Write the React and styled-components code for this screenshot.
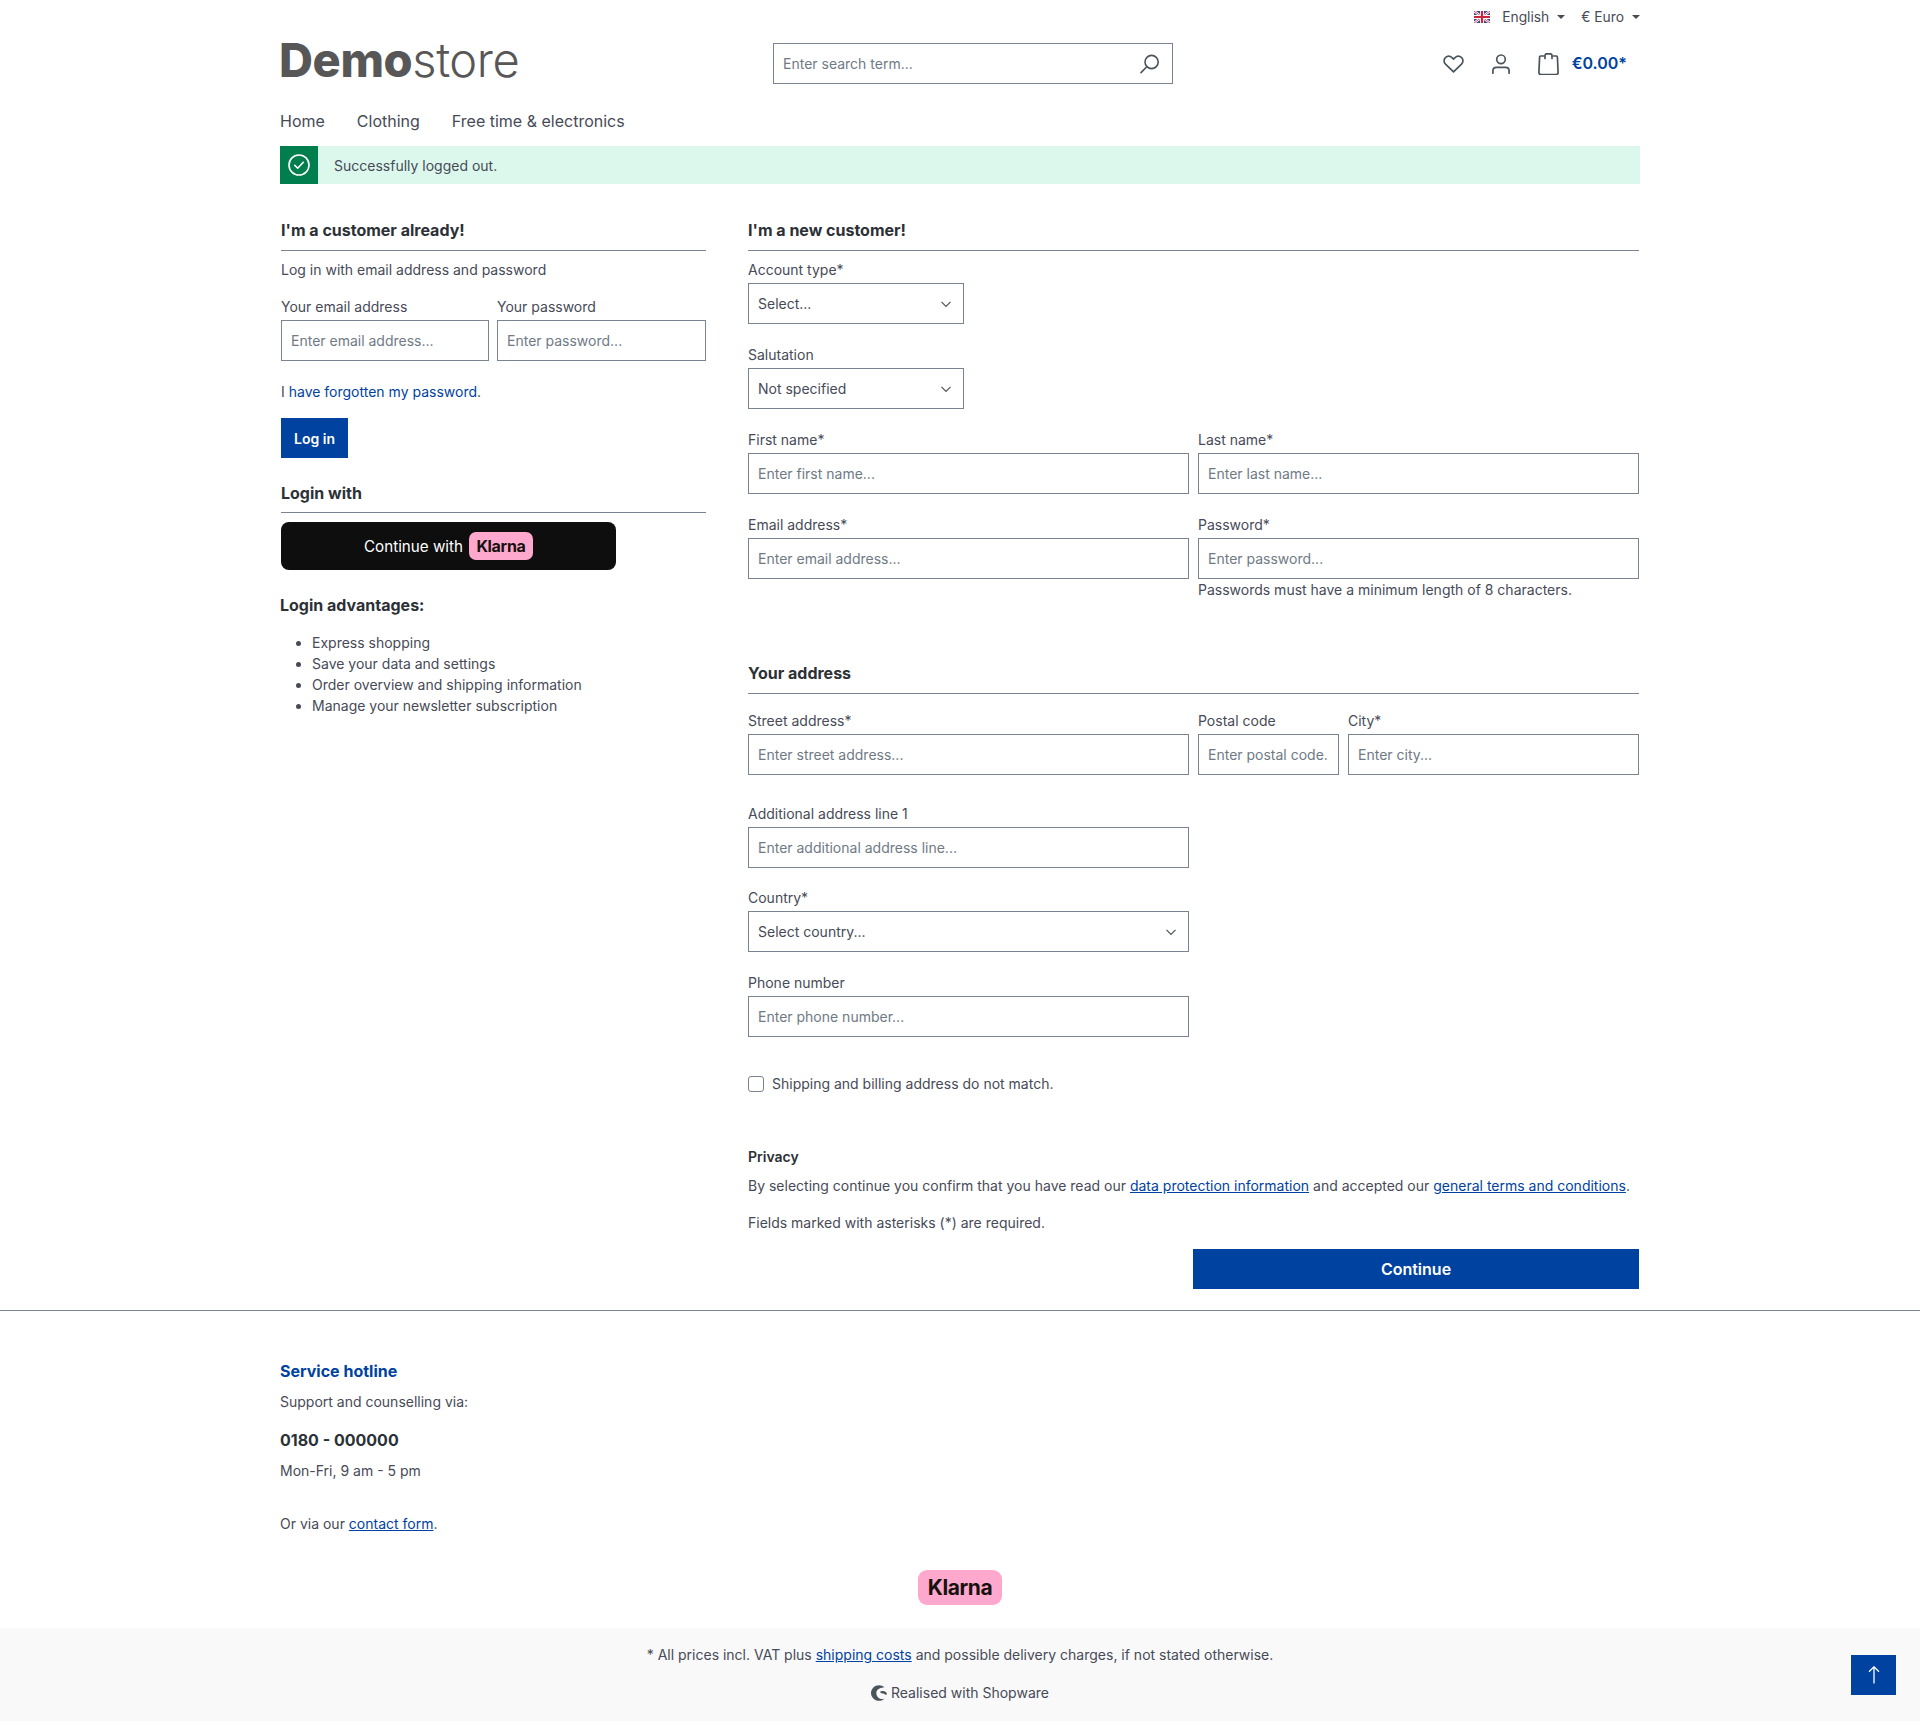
import React from "react";
import styled, { createGlobalStyle } from "styled-components";

const Global = createGlobalStyle`
  *, *::before, *::after { box-sizing: border-box; }
  html, body { margin: 0; padding: 0; background: #fff; }
  body { font-family: Inter, "Noto Sans", sans-serif; font-size: 14px; line-height: 21px; color: #474a57; }
  a { color: #0042a0; }
`;

const Page = styled.div`position: relative; width: 1920px; height: 1721px; overflow: hidden;`;
const Container = styled.div`width: 1360px; margin: 0 auto;`;

const TopBar = styled.div`display: flex; justify-content: flex-end; align-items: center; gap: 16px; height: 34px; color: #474a57; font-size: 13.8px;`;
const TopItem = styled.div`display: flex; align-items: center; height: 21px;`;
const Flag = styled.svg`width: 16px; height: 12px; margin-right: 12px; display: block;`;
const Caret = styled.span`display: inline-block; margin-left: 8px; border-top: 4.8px solid #474a57; border-left: 4.2px solid transparent; border-right: 4.2px solid transparent;`;

const HeaderMain = styled.div`display: grid; grid-template-columns: 493px 400px 1fr; height: 41px; margin-top: 9px; align-items: center;`;
const Logo = styled.div`font-size: 47px; line-height: 41px; color: #575757; letter-spacing: -0.4px; margin: -8px 0 0 -1px; white-space: nowrap;`;
const LogoStrong = styled.span`font-weight: 800;`;
const LogoLight = styled.span`font-weight: 300;`;
const SearchBox = styled.div`position: relative; height: 41px;`;
const SearchInput = styled.input`
  width: 100%; height: 41px; border: 1px solid #798490; padding: 0 50px 0 9px; font: 14px/21px Inter, sans-serif; outline: none; border-radius: 0;
  &::placeholder { color: #6f7a85; opacity: 1; }
`;
const SearchIcon = styled.svg`position: absolute; right: 13px; top: 11px; width: 20px; height: 20px;`;
const Actions = styled.div`display: flex; justify-content: flex-end; align-items: center; padding-right: 13px;`;
const HeartIcon = styled.svg`width: 21px; height: 18px; margin-right: 28px;`;
const UserIcon = styled.svg`width: 18px; height: 20px; margin-right: 28px;`;
const BagIcon = styled.svg`width: 21px; height: 22px; margin: 1px 13px 0 0;`;
const Price = styled.span`font-size: 16px; line-height: 24px; font-weight: 600; color: #0042a0; margin-top: -2px;`;

const Nav = styled.nav`display: flex; gap: 32px; font-size: 16px; line-height: 24px; color: #474a57; padding: 25px 0 13px;`;
const NavLink = styled.span``;

const Alert = styled.div`display: flex; align-items: center; height: 38px; background: #dcf8ed; color: #474a57;`;
const AlertIcon = styled.div`width: 38px; height: 38px; background: #007e4e; display: flex; align-items: center; justify-content: center;`;
const AlertText = styled.span`margin-left: 16px;`;

const Main = styled.div`display: grid; grid-template-columns: 425px 891px; column-gap: 42px; padding: 34px 0 0 1px; align-items: start;`;
const Heading = styled.h2`margin: 0 0 8px; font-size: 16px; line-height: 24px; font-weight: 700; color: #2b3136; padding-bottom: 8px; border-bottom: 1px solid #798490;`;
const SpacedHeading = styled(Heading)`margin-bottom: 16px;`;
const Intro = styled.p`margin: 0 0 16px;`;
const LoginRow = styled.div`display: grid; grid-template-columns: 208px 209px; column-gap: 8px;`;
const Row = styled.div`display: grid; grid-template-columns: repeat(12, 1fr); column-gap: 9px;`;
const Field = styled.div`grid-column: span ${p => p.$span}; margin-bottom: ${p => p.$mb ?? 20}px; min-width: 0;`;
const Label = styled.label`display: block; line-height: 21px; margin-bottom: 3px;`;
const Input = styled.input`
  display: block; width: 100%; height: 41px; border: 1px solid #798490; border-radius: 0; padding: 0 11px 0 9px; font: 14px/21px Inter, sans-serif; color: #474a57; background: #fff; outline: none;
  &::placeholder { color: #6f7a85; opacity: 1; }
`;
const SelectWrap = styled.div`position: relative;`;
const Select = styled.select`
  display: block; width: 100%; height: 41px; border: 1px solid #798490; border-radius: 0; padding: 0 30px 0 9px; font: 14px/21px Inter, sans-serif; color: #474a57; background: #fff; appearance: none; outline: none;
`;
const Chevron = styled.svg`position: absolute; right: 12px; top: 15px; width: 12px; height: 12px;`;
const Help = styled.div`line-height: 21px;`;

const Forgot = styled.p`margin: 20px 0 16px;`;
const PlainLink = styled.a`text-decoration: none;`;
const Button = styled.button`
  display: block; height: 40px; border: 0; border-radius: 0; background: #0042a0; color: #fff; font: 600 14px/21px Inter, sans-serif; padding: 0 13px;
`;
const WideButton = styled(Button)`width: 446px; font-size: 16px; margin-left: auto; margin-right: 0;`;
const LoginWith = styled.h2`margin: 23px 0 9px; font-size: 16px; line-height: 24px; font-weight: 700; color: #2b3136; padding-bottom: 7px; border-bottom: 1px solid #798490;`;
const KlarnaButton = styled.button`
  display: flex; align-items: center; justify-content: center; gap: 6px; width: 335px; height: 48px; border: 0; border-radius: 8px; background: #0e0e0e; color: #fff; font: 400 15.2px/24px Inter, sans-serif; padding: 0;
`;
const KlarnaLabel = styled.span`margin-top: 2px;`;
const KlarnaBadge = styled.span`
  display: inline-flex; align-items: center; justify-content: center; width: 64px; height: 28px; border-radius: 7px; background: #ffa8cd; color: #17120f; font: 700 16px/28px Inter, sans-serif; letter-spacing: -0.3px;
`;
const Advantages = styled.h3`margin: 23px 0 0 -1px; font-size: 16px; line-height: 24px; font-weight: 700; color: #2b3136;`;
const List = styled.ul`margin: 15px 0 0; padding: 0 0 0 31px;`;

const Spacer = styled.div`height: ${p => p.$h}px;`;
const CheckRow = styled.label`display: flex; align-items: center; gap: 8px; height: 21px;`;
const Check = styled.span`display: block; width: 16px; height: 16px; border: 1px solid #798490; border-radius: 3px;`;
const Strong = styled.div`font-weight: 600; color: #2b3136; line-height: 21px; font-size: 14px;`;
const Para = styled.p`margin: ${p => p.$mt}px 0 0; line-height: 21px;`;

const Rule = styled.hr`margin: 21px 0 0; border: 0; border-top: 1px solid #798490;`;
const FooterTitle = styled.div`font-size: 16px; line-height: 24px; font-weight: 700; color: #0042a0; margin-top: 48px;`;
const FooterPhone = styled.div`font-size: 16px; line-height: 24px; font-weight: 700; color: #2b3136; margin-top: 16px;`;
const FooterBadgeRow = styled.div`display: flex; justify-content: center; margin-top: 36px;`;
const FooterBadge = styled.div`
  width: 84px; height: 35px; border-radius: 9px; background: #ffa8cd; color: #17120f; font: 700 21px/35px Inter, sans-serif; letter-spacing: -0.4px; text-align: center;
`;
const Bottom = styled.footer`margin-top: 23px; height: 93px; background: #f9f9f9; text-align: center; padding-top: 16px; position: relative;`;
const Powered = styled.div`display: flex; justify-content: center; align-items: center; gap: 4px; margin-top: 17px;`;
const ShopwareIcon = styled.svg`width: 16px; height: 16px;`;
const ScrollTop = styled.button`
  position: absolute; right: 24px; top: 27px; width: 45px; height: 40px; background: #0042a0; border: 0; padding: 0; display: flex; align-items: center; justify-content: center;
`;

const ChevronDown = () => (
  <Chevron viewBox="0 0 12 12"><path d="M1.5 3.8 6 8.3l4.5-4.5" fill="none" stroke="#4a545b" strokeWidth="1.2" /></Chevron>
);
const SelectField = ({ children }) => (
  <SelectWrap>
    <Select defaultValue="0"><option value="0">{children}</option></Select>
    <ChevronDown />
  </SelectWrap>
);

export default function App() {
  return (
    <Page>
      <Global />
      <Container>
        <TopBar>
          <TopItem>
            <Flag viewBox="0 0 16 12">
              <rect width="16" height="12" fill="#3b4a8c" />
              <path d="M0 0l16 12M16 0L0 12" stroke="#fff" strokeWidth="2.4" />
              <path d="M0 0l16 12M16 0L0 12" stroke="#c8263f" strokeWidth="0.8" />
              <path d="M8 0v12M0 6h16" stroke="#fff" strokeWidth="4" />
              <path d="M8 0v12M0 6h16" stroke="#c8263f" strokeWidth="2.2" />
            </Flag>
            English<Caret />
          </TopItem>
          <TopItem>€ Euro<Caret /></TopItem>
        </TopBar>
        <HeaderMain>
          <Logo><LogoStrong>Demo</LogoStrong><LogoLight>store</LogoLight></Logo>
          <SearchBox>
            <SearchInput placeholder="Enter search term..." />
            <SearchIcon viewBox="0 0 20 20" fill="none" stroke="#4a545b" strokeWidth="1.6">
              <circle cx="11.6" cy="8" r="6.6" />
              <path d="M6.8 12.8 1 18.6" strokeLinecap="round" />
            </SearchIcon>
          </SearchBox>
          <Actions>
            <HeartIcon viewBox="0 0 21 18" fill="none" stroke="#4a545b" strokeWidth="1.7">
              <path d="M10.5 16.8 2.5 9.2C.5 7.2.6 4.2 2.6 2.4 4.5.8 7.2 1 9 2.7l1.5 1.4L12 2.7c1.8-1.7 4.5-1.9 6.4-.3 2 1.8 2.1 4.8.1 6.8Z" strokeLinejoin="round" />
            </HeartIcon>
            <UserIcon viewBox="0 0 18 20" fill="none" stroke="#4a545b" strokeWidth="1.7">
              <circle cx="9" cy="5.3" r="4.3" />
              <path d="M.9 19.2v-2.4c0-2 1.6-3.4 3.6-3.4h9c2 0 3.6 1.4 3.6 3.4v2.4" strokeLinecap="round" />
            </UserIcon>
            <BagIcon viewBox="0 0 21 22" fill="none" stroke="#4a545b" strokeWidth="1.7">
              <path d="M6.5 3H2.6a1 1 0 0 0-1 1L.9 19.5a2 2 0 0 0 2 2h15.2a2 2 0 0 0 2-2L19.4 4a1 1 0 0 0-1-1h-3.9" strokeLinejoin="round" />
              <path d="M7 5.5v-3A1.7 1.7 0 0 1 8.7.8h3.6A1.7 1.7 0 0 1 14 2.5v3" strokeLinecap="round" />
            </BagIcon>
            <Price>€0.00*</Price>
          </Actions>
        </HeaderMain>
        <Nav>
          <NavLink>Home</NavLink>
          <NavLink>Clothing</NavLink>
          <NavLink>Free time &amp; electronics</NavLink>
        </Nav>
        <Alert>
          <AlertIcon>
            <svg width="22" height="22" viewBox="0 0 22 22" fill="none" stroke="#fff" strokeWidth="1.6">
              <circle cx="11" cy="11" r="10" />
              <path d="M6.8 11.4l2.9 2.9 5.6-6" strokeLinecap="round" strokeLinejoin="round" />
            </svg>
          </AlertIcon>
          <AlertText>Successfully logged out.</AlertText>
        </Alert>

        <Main>
          <section>
            <Heading>I'm a customer already!</Heading>
            <Intro>Log in with email address and password</Intro>
            <LoginRow>
              <Field $span={1} $mb={0}>
                <Label>Your email address</Label>
                <Input placeholder="Enter email address..." />
              </Field>
              <Field $span={1} $mb={0}>
                <Label>Your password</Label>
                <Input placeholder="Enter password..." />
              </Field>
            </LoginRow>
            <Forgot><PlainLink as="span">I </PlainLink><PlainLink href="#">have forgotten my password</PlainLink>.</Forgot>
            <Button>Log in</Button>
            <LoginWith>Login with</LoginWith>
            <KlarnaButton><KlarnaLabel>Continue with</KlarnaLabel> <KlarnaBadge>Klarna</KlarnaBadge></KlarnaButton>
            <Advantages>Login advantages:</Advantages>
            <List>
              <li>Express shopping</li>
              <li>Save your data and settings</li>
              <li>Order overview and shipping information</li>
              <li>Manage your newsletter subscription</li>
            </List>
          </section>

          <section>
            <Heading>I'm a new customer!</Heading>
            <Row>
              <Field $span={3}>
                <Label>Account type*</Label>
                <SelectField>Select...</SelectField>
              </Field>
            </Row>
            <Row>
              <Field $span={3}>
                <Label>Salutation</Label>
                <SelectField>Not specified</SelectField>
              </Field>
            </Row>
            <Row>
              <Field $span={6}>
                <Label>First name*</Label>
                <Input placeholder="Enter first name..." />
              </Field>
              <Field $span={6}>
                <Label>Last name*</Label>
                <Input placeholder="Enter last name..." />
              </Field>
            </Row>
            <Row>
              <Field $span={6}>
                <Label>Email address*</Label>
                <Input placeholder="Enter email address..." />
              </Field>
              <Field $span={6}>
                <Label>Password*</Label>
                <Input placeholder="Enter password..." />
                <Help>Passwords must have a minimum length of 8 characters.</Help>
              </Field>
            </Row>
            <Spacer $h={41} />
            <SpacedHeading>Your address</SpacedHeading>
            <Row>
              <Field $span={6} $mb={28}>
                <Label>Street address*</Label>
                <Input placeholder="Enter street address..." />
              </Field>
              <Field $span={2} $mb={28}>
                <Label>Postal code</Label>
                <Input placeholder="Enter postal code..." />
              </Field>
              <Field $span={4} $mb={28}>
                <Label>City*</Label>
                <Input placeholder="Enter city..." />
              </Field>
            </Row>
            <Row>
              <Field $span={6} $mb={19}>
                <Label>Additional address line 1</Label>
                <Input placeholder="Enter additional address line..." />
              </Field>
            </Row>
            <Row>
              <Field $span={6}>
                <Label>Country*</Label>
                <SelectField>Select country...</SelectField>
              </Field>
            </Row>
            <Row>
              <Field $span={6}>
                <Label>Phone number</Label>
                <Input placeholder="Enter phone number..." />
              </Field>
            </Row>
            <Spacer $h={16} />
            <CheckRow><Check />Shipping and billing address do not match.</CheckRow>
            <Spacer $h={52} />
            <Strong>Privacy</Strong>
            <Para $mt={8}>By selecting continue you confirm that you have read our <a href="#">data protection information</a> and accepted our <a href="#">general terms and conditions</a>.</Para>
            <Para $mt={16}>Fields marked with asterisks (*) are required.</Para>
            <Spacer $h={16} />
            <WideButton>Continue</WideButton>
          </section>
        </Main>
      </Container>
      <Rule />
      <Container>
        <FooterTitle>Service hotline</FooterTitle>
        <Para $mt={8}>Support and counselling via:</Para>
        <FooterPhone>0180 - 000000</FooterPhone>
        <Para $mt={8}>Mon-Fri, 9 am - 5 pm</Para>
        <Para $mt={32}>Or via our <a href="#">contact form</a>.</Para>
        <FooterBadgeRow><FooterBadge>Klarna</FooterBadge></FooterBadgeRow>
      </Container>
      <Bottom>
        <div>* All prices incl. VAT plus <a href="#">shipping costs</a> and possible delivery charges, if not stated otherwise.</div>
        <Powered>
          <ShopwareIcon viewBox="0 0 16 16">
            <path d="M13.5 2.2C12 .9 10.2.2 8 .2 3.6.2 0 3.7 0 8s3.6 7.8 8 7.8c2.2 0 4.2-.9 5.6-2.3-1 .5-2.3.8-3.6.5C7 13.3 5.3 11 5.3 8c0-2.8 2-4.4 4.4-5 1.4-.4 2.8-.6 3.8-.8Z" fill="#4a545b" />
            <path d="M15.8 8.8c0-1.1-.9-2.2-2.6-2.6-1.5-.4-3.4-.3-4 .5-.4.6.4 1.2 1.6 1.5 1.6.4 3.4.8 4.4 1.8.3-.5.6-.4.6-1.2Z" fill="#4a545b" />
          </ShopwareIcon>
          Realised with Shopware
        </Powered>
        <ScrollTop aria-label="Back to top">
          <svg width="12" height="18" viewBox="0 0 12 18" fill="none" stroke="#fff" strokeWidth="1.3">
            <path d="M6 17.5V1M1 5.8 6 .8l5 5" />
          </svg>
        </ScrollTop>
      </Bottom>
    </Page>
  );
}
